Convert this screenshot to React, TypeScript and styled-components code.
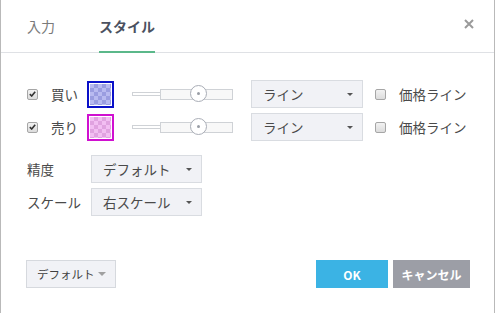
import React from "react";
import styled, { createGlobalStyle } from "styled-components";

const GlobalStyle = createGlobalStyle`
  html, body {
    margin: 0;
    padding: 0;
    background: #ffffff;
  }
  body {
    font-family: "Noto Sans CJK JP", "Noto Sans", sans-serif;
    color: #4a4a4a;
  }
`;

const Dialog = styled.div`
  width: 493px;
  height: 313px;
  border-left: 1px solid #b9b9b9;
  border-right: 1px solid #b9b9b9;
  background: #ffffff;
  display: flex;
  flex-direction: column;
  overflow: hidden;
`;

const Header = styled.div`
  height: 52px;
  border-bottom: 1px solid #dfe1e5;
  display: flex;
  align-items: stretch;
  padding: 0 20px 0 26px;
`;

const Tab = styled.div<{ $active?: boolean }>`
  display: flex;
  align-items: center;
  margin-right: 44px;
  margin-bottom: -1px;
  padding-top: 1px;
  font-size: 14px;
  font-weight: ${(p) => (p.$active ? 700 : 400)};
  color: ${(p) => (p.$active ? "#4b5160" : "#7a7a7a")};
  border-bottom: 2px solid ${(p) => (p.$active ? "#5bb88a" : "transparent")};
  box-sizing: border-box;
`;

const Close = styled.button`
  margin-left: auto;
  align-self: flex-start;
  margin-top: 19px;
  width: 10px;
  height: 10px;
  padding: 0;
  border: none;
  background: transparent;
  display: flex;
  cursor: pointer;
`;

const Body = styled.div`
  padding: 27px 0 0 26px;
  display: flex;
  flex-direction: column;
  font-size: 13.5px;
`;

const StyleRow = styled.div`
  display: flex;
  align-items: center;
  height: 28px;
  margin-bottom: 5px;
`;

const Check = styled.span`
  width: 11px;
  height: 11px;
  box-sizing: border-box;
  border: 1px solid #a6a6a6;
  border-radius: 2px;
  background: linear-gradient(#f2f2f2, #dcdcdc);
  display: inline-flex;
  align-items: center;
  justify-content: center;
  flex: none;
`;

const RowLabel = styled.span`
  margin-left: 13px;
  width: 36px;
  color: #4a4a4a;
`;

const Swatch = styled.div<{ $border: string; $a: string; $b: string }>`
  width: 27px;
  height: 27px;
  box-sizing: border-box;
  border: 2px solid ${(p) => p.$border};
  padding: 1px;
  background-clip: content-box;
  background-color: ${(p) => p.$a};
  background-image: linear-gradient(45deg, ${(p) => p.$b} 25%, transparent 25%, transparent 75%, ${(p) => p.$b} 75%),
    linear-gradient(45deg, ${(p) => p.$b} 25%, transparent 25%, transparent 75%, ${(p) => p.$b} 75%);
  background-size: 8px 8px;
  background-position: 0 0, 4px 4px;
  background-origin: content-box;
`;

const Slider = styled.div`
  margin-left: 18px;
  width: 101px;
  height: 18px;
  display: flex;
  align-items: center;
  position: relative;
`;

const ThinTrack = styled.div`
  width: 28px;
  height: 4px;
  box-sizing: border-box;
  border: 1px solid #cfd2d6;
  border-right: none;
  background: #ffffff;
`;

const ThickTrack = styled.div`
  flex: 1;
  height: 11px;
  box-sizing: border-box;
  border: 1px solid #cfd2d6;
  background: #f8f8f8;
`;

const Thumb = styled.div`
  position: absolute;
  left: 58px;
  top: 0;
  width: 17px;
  height: 17px;
  box-sizing: border-box;
  border: 1px solid #a9adb6;
  border-radius: 50%;
  background: #ffffff;
  display: flex;
  align-items: center;
  justify-content: center;

  &::after {
    content: "";
    width: 3px;
    height: 3px;
    border-radius: 50%;
    background: #9a9ea6;
  }
`;

const Select = styled.div<{ $width: number; $left: number }>`
  margin-left: ${(p) => p.$left}px;
  width: ${(p) => p.$width}px;
  height: 28px;
  box-sizing: border-box;
  border: 1px solid #d9dce1;
  background: #f1f2f6;
  display: flex;
  align-items: center;
  padding: 0 9px 0 11px;
  color: #4a4a4a;
`;

const Caret = styled.span<{ $size?: number; $color?: string }>`
  margin-left: auto;
  width: 0;
  height: 0;
  border-left: ${(p) => (p.$size ?? 6) / 2}px solid transparent;
  border-right: ${(p) => (p.$size ?? 6) / 2}px solid transparent;
  border-top: ${(p) => (p.$size ?? 6) / 2}px solid ${(p) => p.$color ?? "#555"};
`;

const PriceLine = styled.span`
  margin-left: 12px;
  display: flex;
  align-items: center;
  gap: 13px;
  color: #4a4a4a;
`;

const FieldRow = styled.div`
  display: flex;
  align-items: center;
  height: 28px;
  margin-bottom: 5px;
`;

const FieldLabel = styled.span`
  width: 64px;
  color: #4a4a4a;
`;

const Spacer = styled.div`
  height: 9px;
`;

const Footer = styled.div`
  margin-top: auto;
  padding: 0 24px 25px 25px;
  display: flex;
  align-items: center;
`;

const DefaultButton = styled.div`
  width: 90px;
  height: 28px;
  box-sizing: border-box;
  border: 1px solid #d6d9de;
  background: #f1f2f6;
  display: flex;
  align-items: center;
  padding: 0 9px 0 10px;
  font-size: 11.5px;
  color: #3f3f3f;
`;

const Button = styled.button<{ $bg: string; $width: number }>`
  width: ${(p) => p.$width}px;
  height: 28px;
  border: none;
  background: ${(p) => p.$bg};
  color: #ffffff;
  font-family: "Noto Sans CJK JP", "Noto Sans", sans-serif;
  font-size: 12px;
  font-weight: 700;
  padding: 0;
  margin-left: 5px;

  &:first-of-type {
    margin-left: auto;
  }
`;

const CheckMark = () => (
  <svg width="7" height="6" viewBox="0 0 7 6">
    <path d="M0.8 3.2 L2.7 5 L6.2 0.8" stroke="#333" strokeWidth="1.6" fill="none" />
  </svg>
);

const Checkbox = ({ checked }: { checked?: boolean }) => (
  <Check>{checked && <CheckMark />}</Check>
);

const SliderControl = () => (
  <Slider>
    <ThinTrack />
    <ThickTrack />
    <Thumb />
  </Slider>
);

type Series = { label: string; border: string; a: string; b: string };

const series: Series[] = [
  { label: "買い", border: "#0a10c8", a: "#b8baf0", b: "#9a9de0" },
  { label: "売り", border: "#d010d0", a: "#f2bef2", b: "#e0a2e0" },
];

export default function App() {
  return (
    <>
      <GlobalStyle />
      <Dialog>
        <Header>
          <Tab>入力</Tab>
          <Tab $active>スタイル</Tab>
          <Close aria-label="close">
            <svg width="10" height="10" viewBox="0 0 10 10">
              <path d="M1 1 L9 9 M9 1 L1 9" stroke="#9a9a9a" strokeWidth="2" />
            </svg>
          </Close>
        </Header>
        <Body>
          {series.map((s) => (
            <StyleRow key={s.label}>
              <Checkbox checked />
              <RowLabel>{s.label}</RowLabel>
              <Swatch $border={s.border} $a={s.a} $b={s.b} />
              <SliderControl />
              <Select $width={112} $left={18}>
                ライン
                <Caret />
              </Select>
              <PriceLine>
                <Checkbox />
                価格ライン
              </PriceLine>
            </StyleRow>
          ))}
          <Spacer />
          <FieldRow>
            <FieldLabel>精度</FieldLabel>
            <Select $width={111} $left={0}>
              デフォルト
              <Caret />
            </Select>
          </FieldRow>
          <FieldRow>
            <FieldLabel>スケール</FieldLabel>
            <Select $width={111} $left={0}>
              右スケール
              <Caret />
            </Select>
          </FieldRow>
        </Body>
        <Footer>
          <DefaultButton>
            デフォルト
            <Caret $size={9} $color="#a0a0a0" />
          </DefaultButton>
          <Button $bg="#3bb3e4" $width={72}>OK</Button>
          <Button $bg="#9c9ea6" $width={77}>キャンセル</Button>
        </Footer>
      </Dialog>
    </>
  );
}
